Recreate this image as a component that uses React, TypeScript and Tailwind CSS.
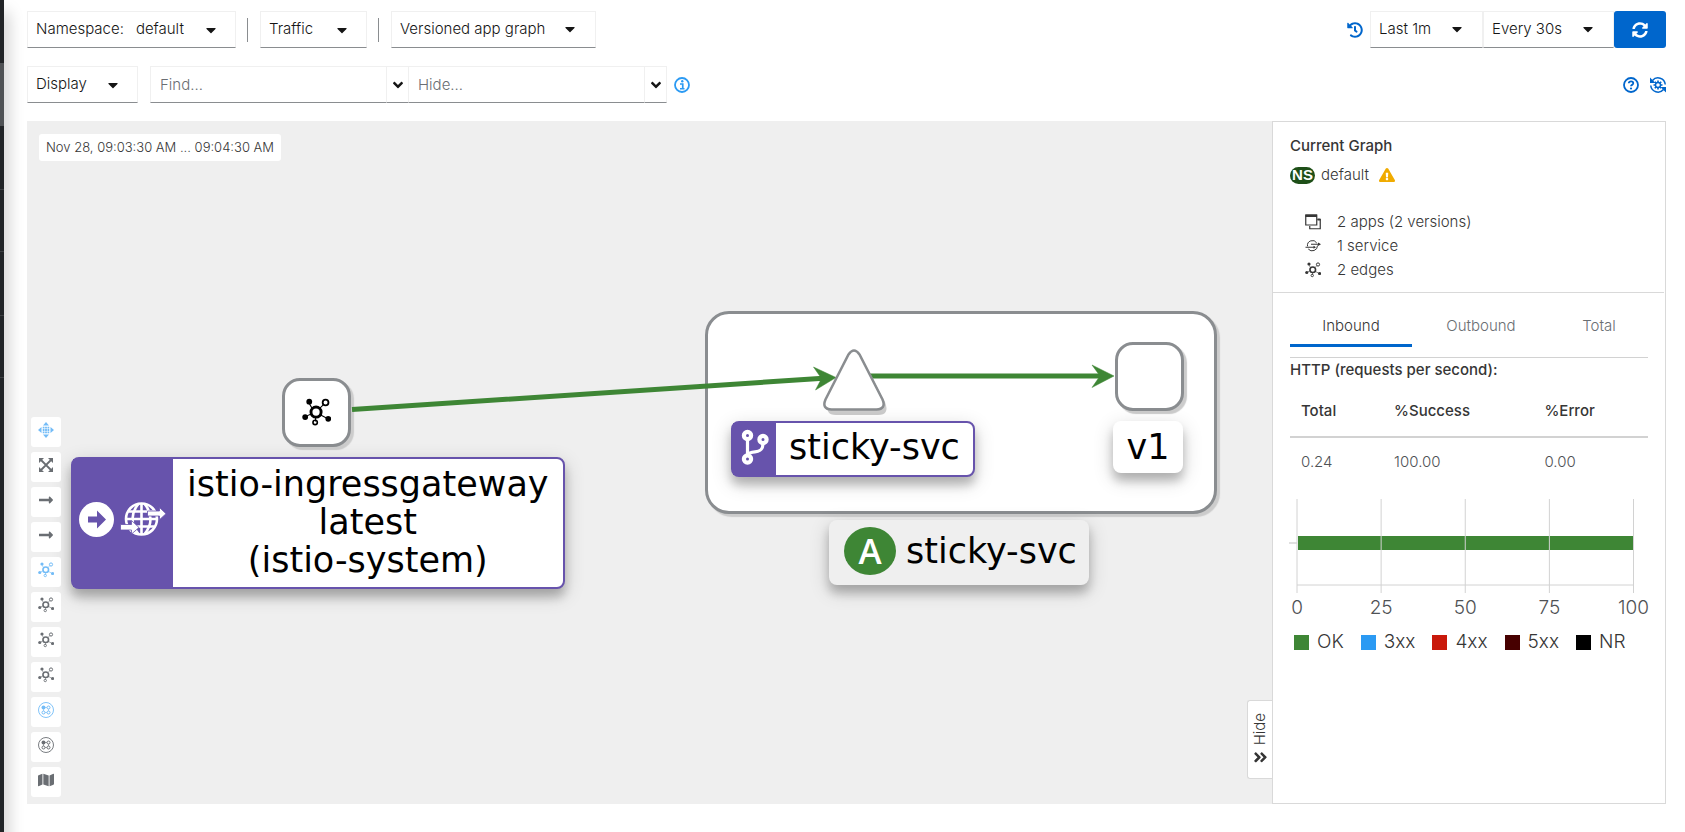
import { useState, type ReactNode } from 'react';
import {
  FaAngleDoubleRight,
  FaAngleDown,
  FaCaretDown,
  FaExclamationTriangle,
  FaHistory,
  FaLongArrowAltRight,
  FaMap,
  FaSyncAlt,
} from 'react-icons/fa';

const control =
  'flex h-[37px] items-center border border-[#f0f0f0] border-b-[#8a8d90] bg-white text-[15px] text-[#151515]';

function MenuButton({ children, className }: { children: ReactNode; className: string }) {
  return (
    <button type="button" aria-haspopup="menu" className={`${control} ${className} justify-between pl-2 pr-4`}>
      {children}
      <FaCaretDown className="size-4" aria-hidden />
    </button>
  );
}

function SelectBox({ label, options, className }: { label: string; options: string[]; className: string }) {
  return (
    <div className={`relative ${className}`}>
      <select aria-label={label} className={`${control} w-full appearance-none pl-2`}>
        {options.map((o) => (
          <option key={o}>{o}</option>
        ))}
      </select>
      <FaCaretDown className="pointer-events-none absolute right-[18px] top-[10px] size-4 text-[#151515]" aria-hidden />
    </div>
  );
}

function FilterBox({ label }: { label: string }) {
  return (
    <div className="flex">
      <input
        type="text"
        aria-label={label}
        placeholder={`${label}...`}
        className={`${control} w-[237px] pl-[9px] placeholder:text-[#6a6e73]`}
      />
      <button type="button" aria-label={`${label} presets`} className={`${control} -ml-px w-[23px] justify-center`}>
        <FaAngleDown className="size-4" />
      </button>
    </div>
  );
}

function Separator() {
  return <span className="ml-[11px] mr-3 h-6 w-px bg-[#8a8d90]" />;
}

function TopologyIcon({ className }: { className: string }) {
  return (
    <svg viewBox="0 0 32 32" className={className} fill="none" stroke="currentColor" aria-hidden>
      <circle cx="15.500" cy="15.500" r="5.600" strokeWidth="3.200" />
      <path d="M19.500 11.500 24 7M11.500 12 8 6M10.500 17.500 5 20M20 18.500 27 22M15 21v5" strokeWidth="1.200" />
      <circle cx="26" cy="5" r="3.200" strokeWidth="2" />
      <circle cx="14.500" cy="27" r="2.400" strokeWidth="1.800" />
      <g fill="currentColor" stroke="none">
        <circle cx="8" cy="4" r="3.200" />
        <circle cx="3.500" cy="21" r="3.200" />
        <circle cx="29" cy="23" r="3.200" />
      </g>
    </svg>
  );
}

function BoxedNodesIcon({ className }: { className: string }) {
  return (
    <svg viewBox="0 0 32 32" className={className} fill="none" stroke="currentColor" aria-hidden>
      <circle cx="16" cy="16" r="15" strokeWidth="1.800" />
      <path d="M14 11h4M11 14v4M21 14v4M14 21h4" strokeWidth="1.200" />
      <circle cx="11" cy="11" r="4" fill="currentColor" stroke="none" />
      <g strokeWidth="2">
        <circle cx="21" cy="11" r="3" />
        <circle cx="11" cy="21" r="3" />
        <circle cx="21" cy="21" r="3" />
      </g>
    </svg>
  );
}

function DragIcon({ className }: { className: string }) {
  return (
    <svg viewBox="0 0 32 32" className={className} fill="currentColor" aria-hidden>
      <path d="M16 0 22 7H10zM16 32l6-7H10zM0 16l7-6v12zM32 16l-7-6v12z" />
      <path d="M9.500 9.500h3.500v3.500H9.500zM14.200 9.500h3.600v3.500h-3.600zM19 9.500h3.500v3.500H19zM9.500 14.200h3.500v3.600H9.500zM14.200 14.200h3.600v3.600h-3.600zM19 14.200h3.500v3.600H19zM9.500 19h3.500v3.500H9.500zM14.200 19h3.600v3.500h-3.600zM19 19h3.500v3.500H19z" />
    </svg>
  );
}

function ExpandIcon({ className }: { className: string }) {
  return (
    <svg viewBox="0 0 28 28" className={className} fill="none" stroke="currentColor" aria-hidden>
      <path d="M4 4l20 20M24 4 4 24" strokeWidth="3.600" />
      <path d="M0 0h10L0 10zM28 0v10l-10-10zM0 28v-10l10 10zM28 28h-10l10-10z" fill="currentColor" stroke="none" />
    </svg>
  );
}

function AppsIcon() {
  return (
    <svg viewBox="0 0 32 32" className="size-4" fill="none" stroke="currentColor" aria-hidden>
      <path d="M1.500 2h22v20h-22z" strokeWidth="2.400" />
      <path d="M1 1h23v5H1z" fill="currentColor" stroke="none" />
      <path d="M25 11h5.500v18.500h-21V24" strokeWidth="2.400" />
      <path d="M25 9h6v4h-6z" fill="currentColor" stroke="none" />
    </svg>
  );
}

function ServiceIcon() {
  return (
    <svg viewBox="0 0 32 32" className="size-4" fill="none" stroke="currentColor" aria-hidden>
      <path d="M5 16.500a10 10 0 0 1 18.500-6.500M25 15A10.500 10.500 0 0 1 6.500 22" strokeWidth="2" />
      <path d="M12 12.500h17M1 18.500h19" strokeWidth="2.200" />
      <path d="M26 9 32 12.500 26 16zM17 15.500l5 3-5 3z" fill="currentColor" stroke="none" />
    </svg>
  );
}

function InfoIcon() {
  return (
    <svg viewBox="0 0 32 32" className="size-4" fill="none" stroke="currentColor" aria-hidden>
      <circle cx="16" cy="16" r="14" strokeWidth="3.600" />
      <path d="M12 14h5.500v9M12 23.500h9" strokeWidth="3.400" />
      <circle cx="16.500" cy="8.500" r="2.400" fill="currentColor" stroke="none" />
    </svg>
  );
}

function HelpIcon() {
  return (
    <svg viewBox="0 0 32 32" className="size-4" fill="none" stroke="currentColor" aria-hidden>
      <circle cx="16" cy="16" r="14" strokeWidth="3.600" />
      <path d="M11.500 12.500c.5-5 9-5 9 0 0 3.500-4.500 3-4.500 6" strokeWidth="3.600" />
      <circle cx="16" cy="23" r="2.200" fill="currentColor" stroke="none" />
    </svg>
  );
}

function ResetSettingsIcon() {
  return (
    <svg viewBox="0 0 32 32" className="size-4" fill="none" stroke="currentColor" aria-hidden>
      <path d="M5 7A14.500 14.500 0 0 1 30.500 15M27 25A14.500 14.500 0 0 1 1.500 17" strokeWidth="3" />
      <path d="M0 1v11h11zM32 31V20H21z" fill="currentColor" stroke="none" />
      <circle cx="16" cy="16" r="5" strokeWidth="2.800" />
      <path
        d="M16 7v3M16 22v3M7 16h3M22 16h3M9.600 9.600l2.200 2.200M20.200 20.200l2.200 2.200M22.400 9.600l-2.200 2.200M11.800 20.200l-2.200 2.200"
        strokeWidth="3.200"
      />
    </svg>
  );
}

function CircledArrowIcon() {
  return (
    <svg viewBox="0 0 35 35" className="size-[35px]" aria-hidden>
      <circle cx="17.500" cy="17.500" r="17.500" fill="#fff" />
      <path d="M9 14.500h9V8.500l9 9-9 9v-6H9z" fill="#6753ac" />
    </svg>
  );
}

function GlobeRouteIcon() {
  return (
    <svg viewBox="0 0 46 36" className="h-9 w-[46px]" fill="none" stroke="#fff" aria-hidden>
      <circle cx="21.500" cy="18" r="15.500" strokeWidth="2.600" />
      <path d="M21.500 2v32M6 18h31M9 10.500h25M9 25.500h25" strokeWidth="2.600" />
      <path d="M18.500 3c-8 9-8 21 0 30M24.500 3c8 9 8 21 0 30" strokeWidth="2.600" />
      <g fill="#fff" stroke="#6753ac" strokeWidth="0.800">
        <path d="M27.500 10h12V6.500L46 12.700l-6.500 6v-3.700h-12z" />
        <path d="M.5 23.500h11v-4L19 26.500 11.500 33v-4H.5z" />
      </g>
    </svg>
  );
}

function BranchIcon() {
  return (
    <svg viewBox="0 0 28 36" className="h-9 w-7" fill="none" stroke="#fff" aria-hidden>
      <g strokeWidth="4.200">
        <circle cx="6.500" cy="6.500" r="3.600" />
        <circle cx="6.500" cy="30" r="3.600" />
        <circle cx="22" cy="10.500" r="3.600" />
      </g>
      <path d="M6.500 10v16M22 14c0 7-3 8.500-8 8.800-4 .3-6 .7-7 3" strokeWidth="3.200" />
    </svg>
  );
}

const tools: { name: string; icon: ReactNode; active?: boolean }[] = [
  { name: 'Drag', icon: <DragIcon className="size-4" />, active: true },
  { name: 'Zoom to fit', icon: <ExpandIcon className="size-[14px]" /> },
  { name: 'Hide healthy edges', icon: <FaLongArrowAltRight className="size-4" /> },
  { name: 'Edge selection', icon: <FaLongArrowAltRight className="size-4" /> },
  { name: 'Layout default', icon: <TopologyIcon className="size-4" />, active: true },
  { name: 'Layout 1', icon: <TopologyIcon className="size-4" /> },
  { name: 'Layout 2', icon: <TopologyIcon className="size-4" /> },
  { name: 'Layout 3', icon: <TopologyIcon className="size-4" /> },
  { name: 'Namespace layout 1', icon: <BoxedNodesIcon className="size-4" />, active: true },
  { name: 'Namespace layout 2', icon: <BoxedNodesIcon className="size-4" /> },
  { name: 'Legend', icon: <FaMap className="size-4" /> },
];

const nodeBox = 'absolute size-[69px] rounded-[18px] border-[3px] border-[#8a8d90] bg-white shadow-[3px_3px_1px_#cccccc]';
const labelShadow = 'shadow-[0_8px_10px_rgba(0,0,0,0.2),0_6px_20px_rgba(0,0,0,0.19)]';
const labelText = 'font-["DejaVu_Sans",sans-serif] text-[35px] font-normal leading-[38px] text-black';

function Graph() {
  return (
    <>
      <div className="absolute left-[678px] top-[190px] h-[203px] w-[512px] rounded-[24px] border-[3px] border-[#8a8d90] bg-white shadow-[3px_3px_1px_#cccccc]" />
      <div className={`${nodeBox} left-[255px] top-[257px] flex items-center justify-center text-black`}>
        <TopologyIcon className="size-[29px]" />
      </div>
      <div className={`${nodeBox} left-[1088px] top-[221px]`} />
      <svg className="absolute left-0 top-0 h-[683px] w-[1245px]" viewBox="0 0 1245 683" aria-hidden>
        <g fill="#3e8635" stroke="#3e8635">
          <path d="M325 288.500 800 257M840 255h240" strokeWidth="5" />
          <path d="M786.500 246 809 256.500 788.500 269l6-11.500zM1065 244l22 11-22 11.500 8-11.500z" strokeWidth="0.500" />
        </g>
        <path d="M822 234q5-8 10 0l23 44q5 13-7 13h-42q-12 0-7-13z" fill="#ccc" transform="translate(3 3)" />
        <path
          d="M821.500 233.500q5.500-8 11 0l23 45q4 9.500-6 10h-45q-10-.5-6-10z"
          fill="#fff"
          stroke="#8a8d90"
          strokeWidth="2.500"
        />
      </svg>

      <div className={`absolute left-[44px] top-[336px] flex h-[132px] rounded-lg border-2 border-[#6753ac] bg-white ${labelShadow}`}>
        <div className="flex w-[100px] items-center gap-[6px] bg-[#6753ac] pb-2 pl-[6px]">
          <CircledArrowIcon />
          <GlobeRouteIcon />
        </div>
        <div className={`px-[14px] pt-[6px] text-center ${labelText}`}>
          istio-ingressgateway
          <br />
          latest
          <br />
          (istio-system)
        </div>
      </div>

      <div className={`absolute left-[704px] top-[300px] flex h-14 items-center rounded-lg border-2 border-[#6753ac] bg-white ${labelShadow}`}>
        <div className="flex h-full w-[43px] items-center justify-center bg-[#6753ac] pb-1">
          <BranchIcon />
        </div>
        <span className={`px-[13px] pb-1 ${labelText}`}>sticky-svc</span>
      </div>

      <div className={`absolute left-[1086px] top-[300px] flex h-[52px] w-[70px] items-center justify-center rounded-lg bg-white ${labelShadow} ${labelText}`}>
        v1
      </div>

      <div className={`absolute left-[802px] top-[399px] flex h-[65px] items-center gap-[10px] rounded-lg bg-[#efefef] pb-1 pl-[15px] pr-3 ${labelShadow} ${labelText}`}>
        <span className="flex h-12 w-[52px] items-center justify-center rounded-[50%] bg-[#3e8635] font-['Open_Sans',sans-serif] font-semibold text-white">
          A
        </span>
        sticky-svc
      </div>
    </>
  );
}

const ticks = [0, 25, 50, 75, 100];

function RequestChart() {
  return (
    <svg viewBox="0 0 370 125" className="-mx-[6px] mt-[6px] block" role="img" aria-label="100% OK">
      <path d="M5 50h8" stroke="#e0e0e0" strokeWidth="2" />
      <path d="M13 92h337" stroke="#d2d2d2" />
      <rect x="14" y="43" width="336" height="14" fill="#3e8635" />
      {ticks.map((t) => (
        <g key={t}>
          <path d={`M${13 + t * 3.365} 6v94`} stroke="#d2d2d2" />
          <text
            x={13 + t * 3.365}
            y="121"
            textAnchor="middle"
            fill="#4f5255"
            fontSize="19"
            fontWeight="300"
          >
            {t}
          </text>
        </g>
      ))}
    </svg>
  );
}

const tabs = [
  { name: 'Inbound', width: 'w-[122px]' },
  { name: 'Outbound', width: 'w-[138px]' },
  { name: 'Total', width: 'w-[98px]' },
];

function SummaryPanel() {
  const [tab, setTab] = useState('Inbound');
  return (
    <aside className="w-[394px] shrink-0 border border-[#d9d9d9] bg-white text-[15px] text-[#363636]">
      <div className="mr-px h-[171px] border-b border-[#d9d9d9] px-[17px] pt-3">
        <h2 className="font-medium leading-6">Current Graph</h2>
        <div className="mt-[5px] flex h-6 items-center">
          <span className="flex h-[17px] w-[25px] items-center justify-center rounded-full bg-[#1e4f18] font-['Liberation_Sans',sans-serif] text-[15px] font-bold text-white">
            NS
          </span>
          <span className="ml-[6px]">default</span>
          <FaExclamationTriangle className="ml-[10px] size-4 text-[#f0ab00]" aria-label="Warning" />
        </div>
        <ul className="mt-[23px] pl-[15px] leading-6">
          <li className="flex items-center gap-4"><AppsIcon />2 apps (2 versions)</li>
          <li className="flex items-center gap-4"><ServiceIcon />1 service</li>
          <li className="flex items-center gap-4"><TopologyIcon className="size-4" />2 edges</li>
        </ul>
      </div>
      <div className="px-[17px] pt-[15px]">
        <div role="tablist" className="flex h-[39px]">
          {tabs.map((t) => (
            <button
              key={t.name}
              type="button"
              role="tab"
              aria-selected={tab === t.name}
              onClick={() => setTab(t.name)}
              className={`${t.width} border-b-[3px] ${
                tab === t.name ? 'border-[#0066cc]' : 'border-transparent text-[#6a6e73]'
              }`}
            >
              {t.name}
            </button>
          ))}
        </div>
        <div className="mt-[10px] border-t border-[#d2d2d2]">
          <h3 className="font-medium leading-6">HTTP (requests per second):</h3>
          <table className="mt-1 w-full table-fixed text-left">
            <colgroup>
              <col className="w-[26%]" />
              <col className="w-[42%]" />
              <col />
            </colgroup>
            <thead>
              <tr className="h-[51px] border-b-2 border-[#d2d2d2]">
                <th className="pl-[11px] font-medium">Total</th>
                <th className="pl-[11px] font-medium">%Success</th>
                <th className="pl-[11px] font-medium">%Error</th>
              </tr>
            </thead>
            <tbody>
              <tr className="h-[50px] text-[#4f5255]">
                <td className="pl-[11px]">0.24</td>
                <td className="pl-[11px]">100.00</td>
                <td className="pl-[11px]">0.00</td>
              </tr>
            </tbody>
          </table>
          <RequestChart />
          <ul className="mt-3 flex gap-[17px] pl-1 text-[19px] font-light leading-6 text-[#363636]">
            <li className="flex items-center gap-2"><span className="size-[15px] bg-[#3e8635]" />OK</li>
            <li className="flex items-center gap-2"><span className="size-[15px] bg-[#2b9af3]" />3xx</li>
            <li className="flex items-center gap-2"><span className="size-[15px] bg-[#c9190b]" />4xx</li>
            <li className="flex items-center gap-2"><span className="size-[15px] bg-[#470000]" />5xx</li>
            <li className="flex items-center gap-2"><span className="size-[15px] bg-black" />NR</li>
          </ul>
        </div>
      </div>
    </aside>
  );
}

export default function App() {
  return (
    <div className="flex min-h-screen bg-white font-['Inter',sans-serif] font-light">
      <nav aria-label="Main" className="z-10 w-1 shrink-0 bg-[#212427] shadow-[0_16px_16px_4px_rgba(3,3,3,0.22)]">
        <div className="h-[63px]" />
        <div className="h-[63px] bg-[#4f5255]" />
        <div className="h-[63px]" />
        <div className="h-[63px] border-y border-[#3c3f42]" />
        <div className="h-[63px]" />
        <div className="h-[63px] border-y border-[#3c3f42]" />
      </nav>
      <main className="flex min-w-0 flex-1 flex-col pb-7 pl-[23px] pr-[19px] pt-[11px]">
        <div className="flex items-center">
          <MenuButton className="w-[209px]">
            <span className="flex gap-3"><span>Namespace:</span><span>default</span></span>
          </MenuButton>
          <Separator />
          <MenuButton className="w-[107px]">Traffic</MenuButton>
          <Separator />
          <SelectBox
            label="Graph type"
            className="w-[205px]"
            options={['Versioned app graph', 'App graph', 'Service graph', 'Workload graph']}
          />
          <button type="button" aria-label="Replay" className="ml-auto mr-[7px] text-[#0066cc]">
            <FaHistory className="size-4" />
          </button>
          <SelectBox label="Duration" className="w-[113px]" options={['Last 1m', 'Last 5m', 'Last 10m']} />
          <SelectBox label="Refresh interval" className="w-[131px]" options={['Every 30s', 'Every 1m', 'Pause']} />
          <button
            type="button"
            aria-label="Refresh"
            className="flex h-[37px] w-[52px] items-center justify-center rounded-[3px] bg-[#0066cc] text-white"
          >
            <FaSyncAlt className="size-4" />
          </button>
        </div>

        <div className="mt-[18px] flex items-center">
          <MenuButton className="mr-3 w-[111px]">Display</MenuButton>
          <FilterBox label="Find" />
          <div className="-ml-px">
            <FilterBox label="Hide" />
          </div>
          <button type="button" aria-label="Find and hide help" className="ml-[7px] text-[#2b9af3]">
            <InfoIcon />
          </button>
          <button type="button" aria-label="Help" className="ml-auto text-[#0066cc]">
            <HelpIcon />
          </button>
          <button type="button" aria-label="Reset settings" className="ml-[11px] text-[#0066cc]">
            <ResetSettingsIcon />
          </button>
        </div>

        <div className="mt-[18px] flex min-h-[683px] flex-1">
          <section aria-label="Traffic graph" className="relative flex min-w-0 flex-1 flex-col overflow-hidden bg-[#efefef]">
            <Graph />
            <div className="relative ml-3 mt-[13px] flex h-[27px] items-center self-start rounded-[3px] bg-white px-[7px] text-[13px] text-[#363636]">
              Nov 28, 09:03:30 AM ... 09:04:30 AM
            </div>
            <div className="relative mb-[7px] ml-1 mt-auto flex flex-col gap-[5px] self-start">
              {tools.map((t) => (
                <button
                  key={t.name}
                  type="button"
                  aria-label={t.name}
                  className={`flex size-[30px] items-center justify-center rounded-[3px] bg-white pb-1 ${
                    t.active ? 'text-[#73bcf7]' : 'text-[#6a6e73]'
                  }`}
                >
                  {t.icon}
                </button>
              ))}
            </div>
            <button
              type="button"
              className="absolute bottom-[25px] right-0 flex h-[79px] w-[25px] items-center justify-center rounded-l-[3px] border border-r-0 border-[#d9d9d9] bg-white text-[15px] text-[#363636]"
            >
              <span className="flex rotate-180 items-center gap-1 [writing-mode:vertical-rl]">
                <FaAngleDoubleRight className="size-4 rotate-180" aria-hidden />
                Hide
              </span>
            </button>
          </section>
          <SummaryPanel />
        </div>
      </main>
    </div>
  );
}
